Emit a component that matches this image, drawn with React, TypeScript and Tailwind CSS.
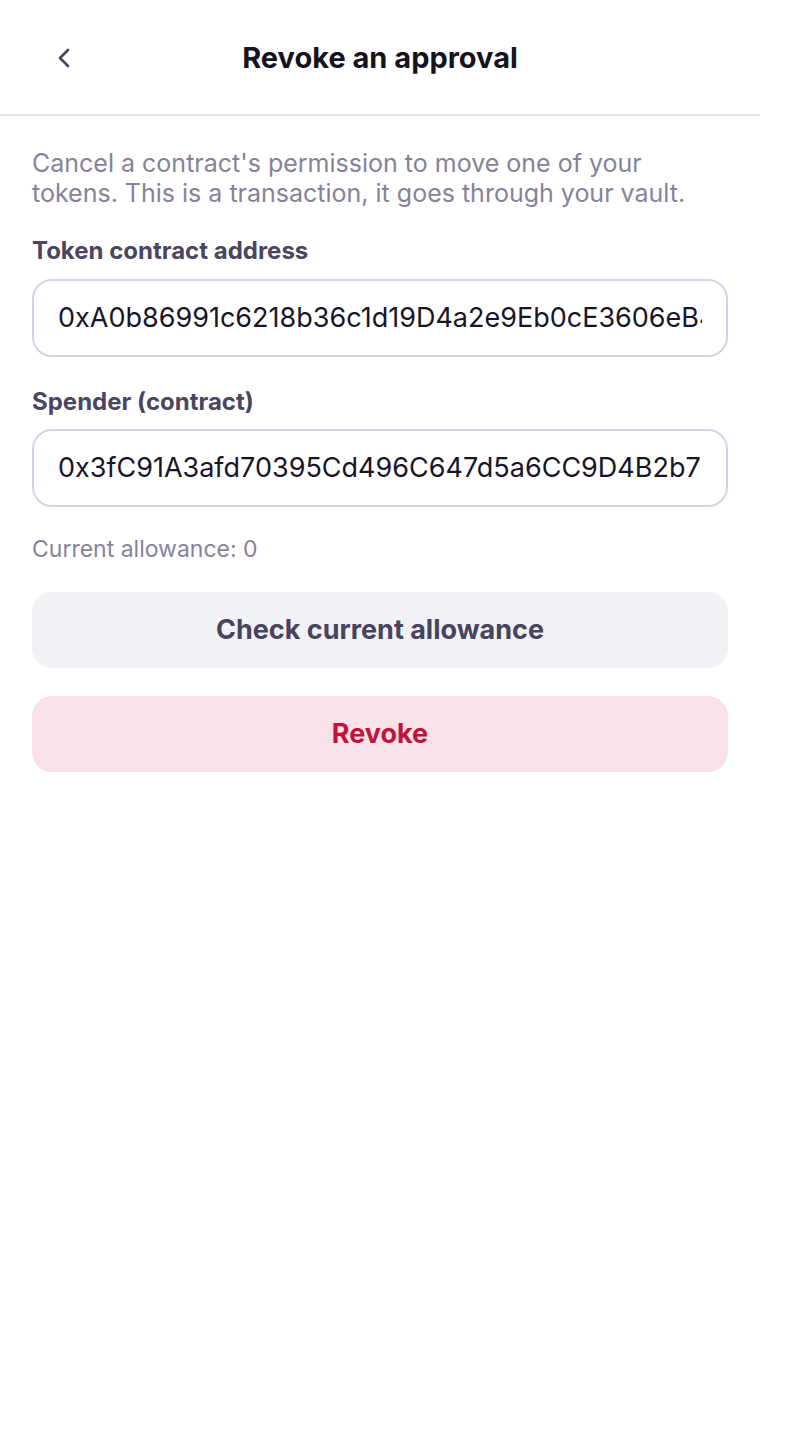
import React from "react";

function ChevronLeft() {
  return (
    <svg width="32" height="32" viewBox="0 0 24 24" fill="none" stroke="#4a4563" strokeWidth="2" strokeLinecap="round" strokeLinejoin="round">
      <path d="m15 18-6-6 6-6" />
    </svg>
  );
}

export default function App() {
  return (
    <div className="w-[760px] min-h-[1440px] bg-white" style={{ fontFamily: "Inter, 'Noto Sans', sans-serif" }}>
      <header className="relative h-[116px] border-b-2 border-[#e4e2ef] flex items-center justify-center">
        <button className="absolute left-[40px] top-[42px] w-[48px] h-[32px] flex items-center justify-center">
          <ChevronLeft />
        </button>
        <h1 className="text-[29px] leading-[36px] font-bold text-[#15131f] mt-[2px]">Revoke an approval</h1>
      </header>
      <main className="px-8 pt-[32px] flex flex-col">
        <p className="pr-[36px] text-[25px] leading-[30px] text-[#86829c]">
          Cancel a contract's permission to move one of your tokens. This is a transaction, it goes through your vault.
        </p>
        <label className="mt-[28px] text-[24px] leading-[30px] font-bold text-[#4a4560]">Token contract address</label>
        <div className="mt-[13px] h-[78px] rounded-[20px] border-2 border-[#d6d2e8] px-6 flex items-center overflow-hidden">
          <input
            readOnly
            value="0xA0b86991c6218b36c1d19D4a2e9Eb0cE3606eB48"
            className="w-full bg-transparent outline-none text-[27px] text-[#17152a]"
          />
        </div>
        <label className="mt-[30px] text-[24px] leading-[30px] font-bold text-[#4a4560]">Spender (contract)</label>
        <div className="mt-[12px] h-[78px] rounded-[20px] border-2 border-[#d6d2e8] px-6 flex items-center overflow-hidden">
          <input
            readOnly
            value="0x3fC91A3afd70395Cd496C647d5a6CC9D4B2b7FAD"
            className="w-full bg-transparent outline-none text-[27px] text-[#17152a]"
          />
        </div>
        <p className="mt-[27px] text-[23px] leading-[30px] text-[#86829c]">Current allowance: 0</p>
        <button className="mt-[28px] h-[76px] rounded-[20px] bg-[#f1f2f6] text-[27px] font-bold text-[#49435e]">
          Check current allowance
        </button>
        <button className="mt-[28px] h-[76px] rounded-[20px] bg-[#f8e2e7] text-[27px] font-bold text-[#c4103d]">
          Revoke
        </button>
      </main>
    </div>
  );
}
